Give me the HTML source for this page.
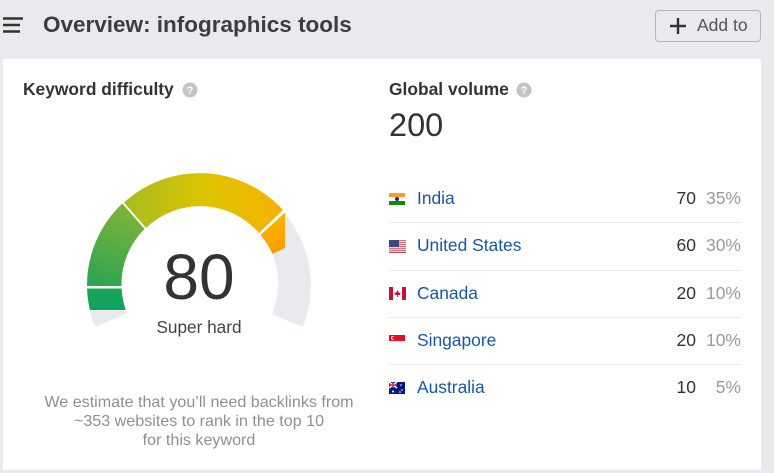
<!DOCTYPE html>
<html><head><meta charset="utf-8">
<style>
html,body{margin:0;padding:0;width:774px;height:473px;overflow:hidden;background:#e9eaed;font-family:"Liberation Sans",sans-serif;color:#333}
.a{position:absolute;white-space:nowrap;line-height:1}
#card{position:absolute;left:3px;top:59px;width:758px;height:411px;background:#fff}
.hl{position:absolute;left:389px;width:352px;height:1px;background:#e8e9eb}
.lnk{color:#1a56a8;font-size:17.4px;left:417px}
.n{font-size:17.5px;right:78px;color:#333}
.p{font-size:17.5px;right:33px;color:#999}
.c{left:0;width:398px;text-align:center;color:#8f8f8f;font-size:16.1px}
</style></head><body>
<div id="card"></div>
<svg class="a" style="left:3px;top:17px" width="21" height="17"><path d="M0 1.500H20M0 8H17M0 14.500H17" stroke="#333" stroke-width="2.400" fill="none"/></svg>
<div class="a" style="left:43px;top:14px;font-size:22.500px;font-weight:bold;color:#3a3d42">Overview: infographics tools</div>
<div class="a" style="left:655px;top:10px;width:104px;height:30px;border:1px solid #b4b6ba;border-radius:4px"></div>
<svg class="a" style="left:670px;top:18px" width="16" height="16"><path d="M8 0V16M0 8H16" stroke="#333" stroke-width="2.400"/></svg>
<div class="a" style="left:697px;top:17px;font-size:17.500px;color:#555">Add to</div>

<div class="a" style="left:23px;top:81px;font-size:17.400px;font-weight:bold;color:#333">Keyword difficulty</div>
<svg class="a" style="left:182px;top:82px" width="16" height="16"><circle cx="8" cy="8" r="7.500" fill="#c4c4c4"/><text x="8" y="12" font-size="11" font-weight="bold" fill="#fff" text-anchor="middle" font-family="Liberation Sans">?</text></svg>
<div class="a" style="left:389px;top:81px;font-size:17.400px;font-weight:bold;color:#333">Global volume</div>
<svg class="a" style="left:516px;top:82px" width="16" height="16"><circle cx="8" cy="8" r="7.500" fill="#c4c4c4"/><text x="8" y="12" font-size="11" font-weight="bold" fill="#fff" text-anchor="middle" font-family="Liberation Sans">?</text></svg>
<div class="a" style="left:389px;top:109px;font-size:32.500px;color:#333">200</div>

<svg class="a" style="left:0;top:0" width="774" height="473">
<defs>
<linearGradient id="g2" gradientUnits="userSpaceOnUse" x1="100" y1="286" x2="135" y2="205"><stop offset="0" stop-color="#2ea552"/><stop offset="1" stop-color="#82b536"/></linearGradient>
<linearGradient id="g3" gradientUnits="userSpaceOnUse" x1="124" y1="200" x2="283" y2="200"><stop offset="0" stop-color="#a4bc20"/><stop offset=".5" stop-color="#dcc400"/><stop offset="1" stop-color="#f7b100"/></linearGradient>
<linearGradient id="g4" gradientUnits="userSpaceOnUse" x1="270" y1="220" x2="280" y2="252"><stop offset="0" stop-color="#f8b400"/><stop offset="1" stop-color="#fe9c00"/></linearGradient>
<linearGradient id="g1" gradientUnits="userSpaceOnUse" x1="0" y1="288" x2="0" y2="310"><stop offset="0" stop-color="#1ba55a"/><stop offset="1" stop-color="#0ca35e"/></linearGradient>
</defs>
<path d="M89.900 311A112.500 112.500 0 0 0 95 327L127 313.500A78 78 0 0 1 125.800 311Z" fill="#e9eaed"/>
<path d="M285 214A112.500 112.500 0 0 1 303 327L272 314A78 78 0 0 0 272.500 254L285 248Z" fill="#e9eaed"/>
<path d="M87.050 288.500A112.500 112.500 0 0 0 89.900 310L125.800 310A78 78 0 0 1 121.600 288.500Z" fill="url(#g1)"/>
<path d="M87 286A112.500 112.500 0 0 1 122.300 203.500L144.500 229A78 78 0 0 0 121.500 286Z" fill="url(#g2)"/>
<path d="M124 202.500A112.500 112.500 0 0 1 283 210L259 233A78 78 0 0 0 146 228Z" fill="url(#g3)"/>
<path d="M285 212.500V248L272.500 254A78 78 0 0 0 260.500 235Z" fill="url(#g4)"/>
</svg>
<div class="a" style="left:0;width:398px;text-align:center;top:245px;font-size:64px;color:#333">80</div>
<div class="a" style="left:0;width:398px;text-align:center;top:319px;font-size:17.200px;color:#444">Super hard</div>
<div class="a c" style="top:394px">We estimate that you’ll need backlinks from</div>
<div class="a c" style="top:413px">~353 websites to rank in the top 10</div>
<div class="a c" style="top:432px">for this keyword</div>

<svg class="a" style="left:389px;top:193px" width="16" height="12"><rect width="16" height="4" fill="#ff9a33"/><rect y="4" width="16" height="4" fill="#fff"/><rect y="8" width="16" height="4" fill="#138808"/><circle cx="8" cy="6" r="2" fill="#1b2a80"/></svg>
<svg class="a" style="left:389px;top:240px" width="17" height="13"><rect width="17" height="13" fill="#fff"/><path d="M0 .7H17M0 2.700H17M0 4.700H17M0 6.700H17M0 8.700H17M0 10.700H17M0 12.500H17" stroke="#c8465a" stroke-width="1"/><rect width="10" height="7" fill="#3c4a80"/></svg>
<svg class="a" style="left:389px;top:287px" width="17" height="13"><rect width="17" height="13" fill="#fff"/><rect width="4" height="13" fill="#c8102e"/><rect x="13" width="4" height="13" fill="#c8102e"/><path d="M8.500 3L10 6L11.500 5.500L11 8L9 8V10H8V8L6 8L5.500 5.500L7 6Z" fill="#c8102e"/></svg>
<svg class="a" style="left:389px;top:335px" width="16" height="12"><rect width="16" height="6" fill="#e8101c"/><rect y="6" width="16" height="6" fill="#fff"/><circle cx="4" cy="3" r="2" fill="#fff"/><circle cx="4.800" cy="3" r="1.600" fill="#e8101c"/></svg>
<svg class="a" style="left:389px;top:382px" width="16" height="12"><rect width="16" height="12" fill="#0a1a7a"/><path d="M0 0L8 6M8 0L0 6" stroke="#fff" stroke-width="1.500"/><path d="M4 0V6M0 3H8" stroke="#d8304a" stroke-width="1.500"/><circle cx="4" cy="9.500" r="1" fill="#fff"/><circle cx="12" cy="3" r=".8" fill="#fff"/><circle cx="13" cy="8" r=".8" fill="#fff"/><circle cx="11" cy="10" r=".8" fill="#fff"/></svg>

<div class="a lnk" style="top:190px">India</div><div class="a n" style="top:190px">70</div><div class="a p" style="top:190px">35%</div>
<div class="hl" style="top:222px"></div>
<div class="a lnk" style="top:237px">United States</div><div class="a n" style="top:237px">60</div><div class="a p" style="top:237px">30%</div>
<div class="hl" style="top:270px"></div>
<div class="a lnk" style="top:285px">Canada</div><div class="a n" style="top:285px">20</div><div class="a p" style="top:285px">10%</div>
<div class="hl" style="top:317px"></div>
<div class="a lnk" style="top:332px">Singapore</div><div class="a n" style="top:332px">20</div><div class="a p" style="top:332px">10%</div>
<div class="hl" style="top:364px"></div>
<div class="a lnk" style="top:379px">Australia</div><div class="a n" style="top:379px">10</div><div class="a p" style="top:379px">5%</div>
</body></html>
